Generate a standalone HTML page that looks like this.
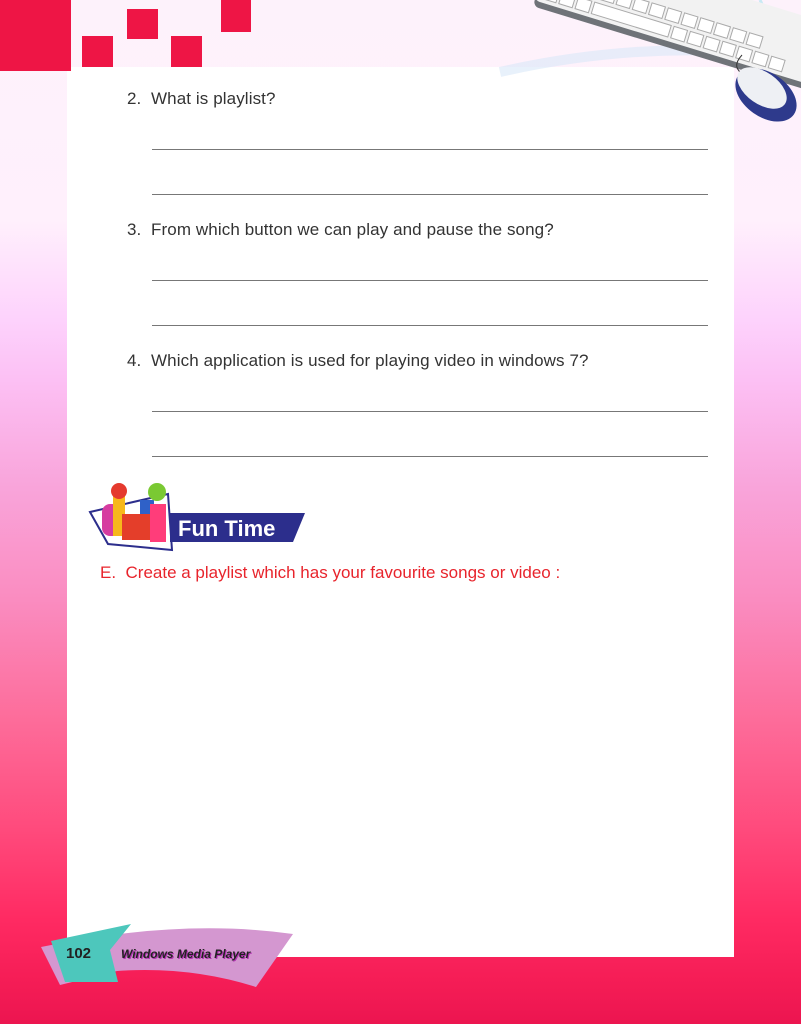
<!DOCTYPE html>
<html><head><meta charset="utf-8"><style>
*{margin:0;padding:0;box-sizing:border-box}
body{width:801px;height:1024px;position:relative;overflow:hidden;font-family:"Liberation Sans",sans-serif;
background:linear-gradient(180deg,#fdf2fb 0px,#fff0fc 220px,#fdd2fc 320px,#fcc0f4 380px,#f9a6dc 480px,#fa8cc0 600px,#fd6c9a 720px,#ff4a7c 830px,#ff2a62 920px,#f51d56 980px,#ec1550 1024px)}
.panel{position:absolute;left:67px;top:67px;width:667px;height:890px;background:#fff}
.sq{position:absolute;background:#ee1545}
.q{position:absolute;left:127px;font-size:17px;color:#333;letter-spacing:0.1px}
.ln{position:absolute;left:152px;width:556px;height:1px;background:#777}
</style></head><body>
<div class="panel"></div>
<div class="sq" style="left:0;top:0;width:71px;height:71px"></div>
<div class="sq" style="left:82px;top:36px;width:31px;height:31px"></div>
<div class="sq" style="left:127px;top:9px;width:31px;height:30px"></div>
<div class="sq" style="left:171px;top:36px;width:31px;height:31px"></div>
<div class="sq" style="left:221px;top:0;width:30px;height:32px"></div>
<svg style="position:absolute;left:480px;top:0" width="321" height="125">
<path d="M20 72 Q160 40 300 55" stroke="#d8e8f8" stroke-width="10" fill="none" opacity=".6"/>
<path d="M280 0 Q300 40 270 60" stroke="#c8eaf4" stroke-width="3" fill="none"/>
<g transform="rotate(17 60 0)">
<rect x="55" y="-60" width="320" height="68" rx="6" fill="#6f7378"/>
<rect x="55" y="-62" width="320" height="64" rx="5" fill="#f2f2f2"/>
<g fill="#fff" stroke="#aaa" stroke-width="1">
<rect x="62" y="-14" width="14" height="12"/><rect x="79" y="-14" width="14" height="12"/><rect x="96" y="-14" width="14" height="12"/><rect x="113" y="-14" width="80" height="12"/><rect x="196" y="-14" width="14" height="12"/><rect x="213" y="-14" width="14" height="12"/><rect x="230" y="-14" width="14" height="12"/><rect x="247" y="-14" width="14" height="12"/><rect x="264" y="-14" width="14" height="12"/><rect x="281" y="-14" width="14" height="12"/><rect x="298" y="-14" width="14" height="12"/>
<rect x="66" y="-30" width="14" height="12"/><rect x="83" y="-30" width="14" height="12"/><rect x="100" y="-30" width="14" height="12"/><rect x="117" y="-30" width="14" height="12"/><rect x="134" y="-30" width="14" height="12"/><rect x="151" y="-30" width="14" height="12"/><rect x="168" y="-30" width="14" height="12"/><rect x="185" y="-30" width="14" height="12"/><rect x="202" y="-30" width="14" height="12"/><rect x="219" y="-30" width="14" height="12"/><rect x="236" y="-30" width="14" height="12"/><rect x="253" y="-30" width="14" height="12"/><rect x="270" y="-30" width="14" height="12"/>
</g></g>
<path d="M262 55 Q250 68 265 75" stroke="#333" fill="none"/>
<ellipse cx="286" cy="95" rx="34" ry="22" transform="rotate(35 286 95)" fill="#2e3a8c"/>
<ellipse cx="282" cy="88" rx="28" ry="16" transform="rotate(35 282 88)" fill="#eef0f4"/>
</svg>
<div class="q" style="top:89px">2.&nbsp; What is playlist?</div>
<div class="ln" style="top:149px"></div><div class="ln" style="top:194px"></div>
<div class="q" style="top:220px">3.&nbsp; From which button we can play and pause the song?</div>
<div class="ln" style="top:280px"></div><div class="ln" style="top:325px"></div>
<div class="q" style="top:351px">4.&nbsp; Which application is used for playing video in windows 7?</div>
<div class="ln" style="top:411px"></div><div class="ln" style="top:456px"></div>
<svg style="position:absolute;left:80px;top:474px" width="230" height="80">
<path d="M10 38 L88 20 L92 76 L28 70 Z" fill="#fff" stroke="#2c2e8c" stroke-width="2"/>
<path d="M90 39 L225 39 L213 68 L90 68 Z" fill="#2c2e8c"/>
<text x="98" y="62" font-family="Liberation Sans" font-weight="bold" font-size="22" fill="#fff">Fun  Time</text>
<rect x="22" y="30" width="20" height="32" rx="8" fill="#d63ca0"/>
<rect x="33" y="18" width="12" height="44" fill="#f7b81c"/>
<circle cx="39" cy="17" r="8" fill="#e53a2e"/>
<rect x="60" y="26" width="14" height="40" fill="#2f61c8"/>
<circle cx="77" cy="18" r="9" fill="#7ac932"/>
<rect x="70" y="30" width="16" height="38" fill="#ff3d7a"/>
<rect x="42" y="40" width="28" height="26" fill="#e43e2a"/>
</svg>
<div style="position:absolute;left:100px;top:563px;font-size:17px;color:#e8242c">E.&nbsp; Create a playlist which has your favourite songs or video :</div>
<svg style="position:absolute;left:0;top:900px" width="300" height="124">
<path d="M41 47 Q180 18 293 34 L256 87 Q190 66 117 71 L60 85 Z" fill="#d497d0"/>
<path d="M51 41 L131 24 L110 50 L118 82 L65 82 Z" fill="#4dc7bc"/>
<text x="66" y="58" font-family="Liberation Sans" font-weight="bold" font-size="15" fill="#222">102</text>
<text x="122" y="59" font-family="Liberation Sans" font-style="italic" font-weight="bold" font-size="12" fill="#b030b0">Windows Media Player</text>
<text x="121" y="58" font-family="Liberation Sans" font-style="italic" font-weight="bold" font-size="12" fill="#222">Windows Media Player</text>
</svg>
</body></html>
